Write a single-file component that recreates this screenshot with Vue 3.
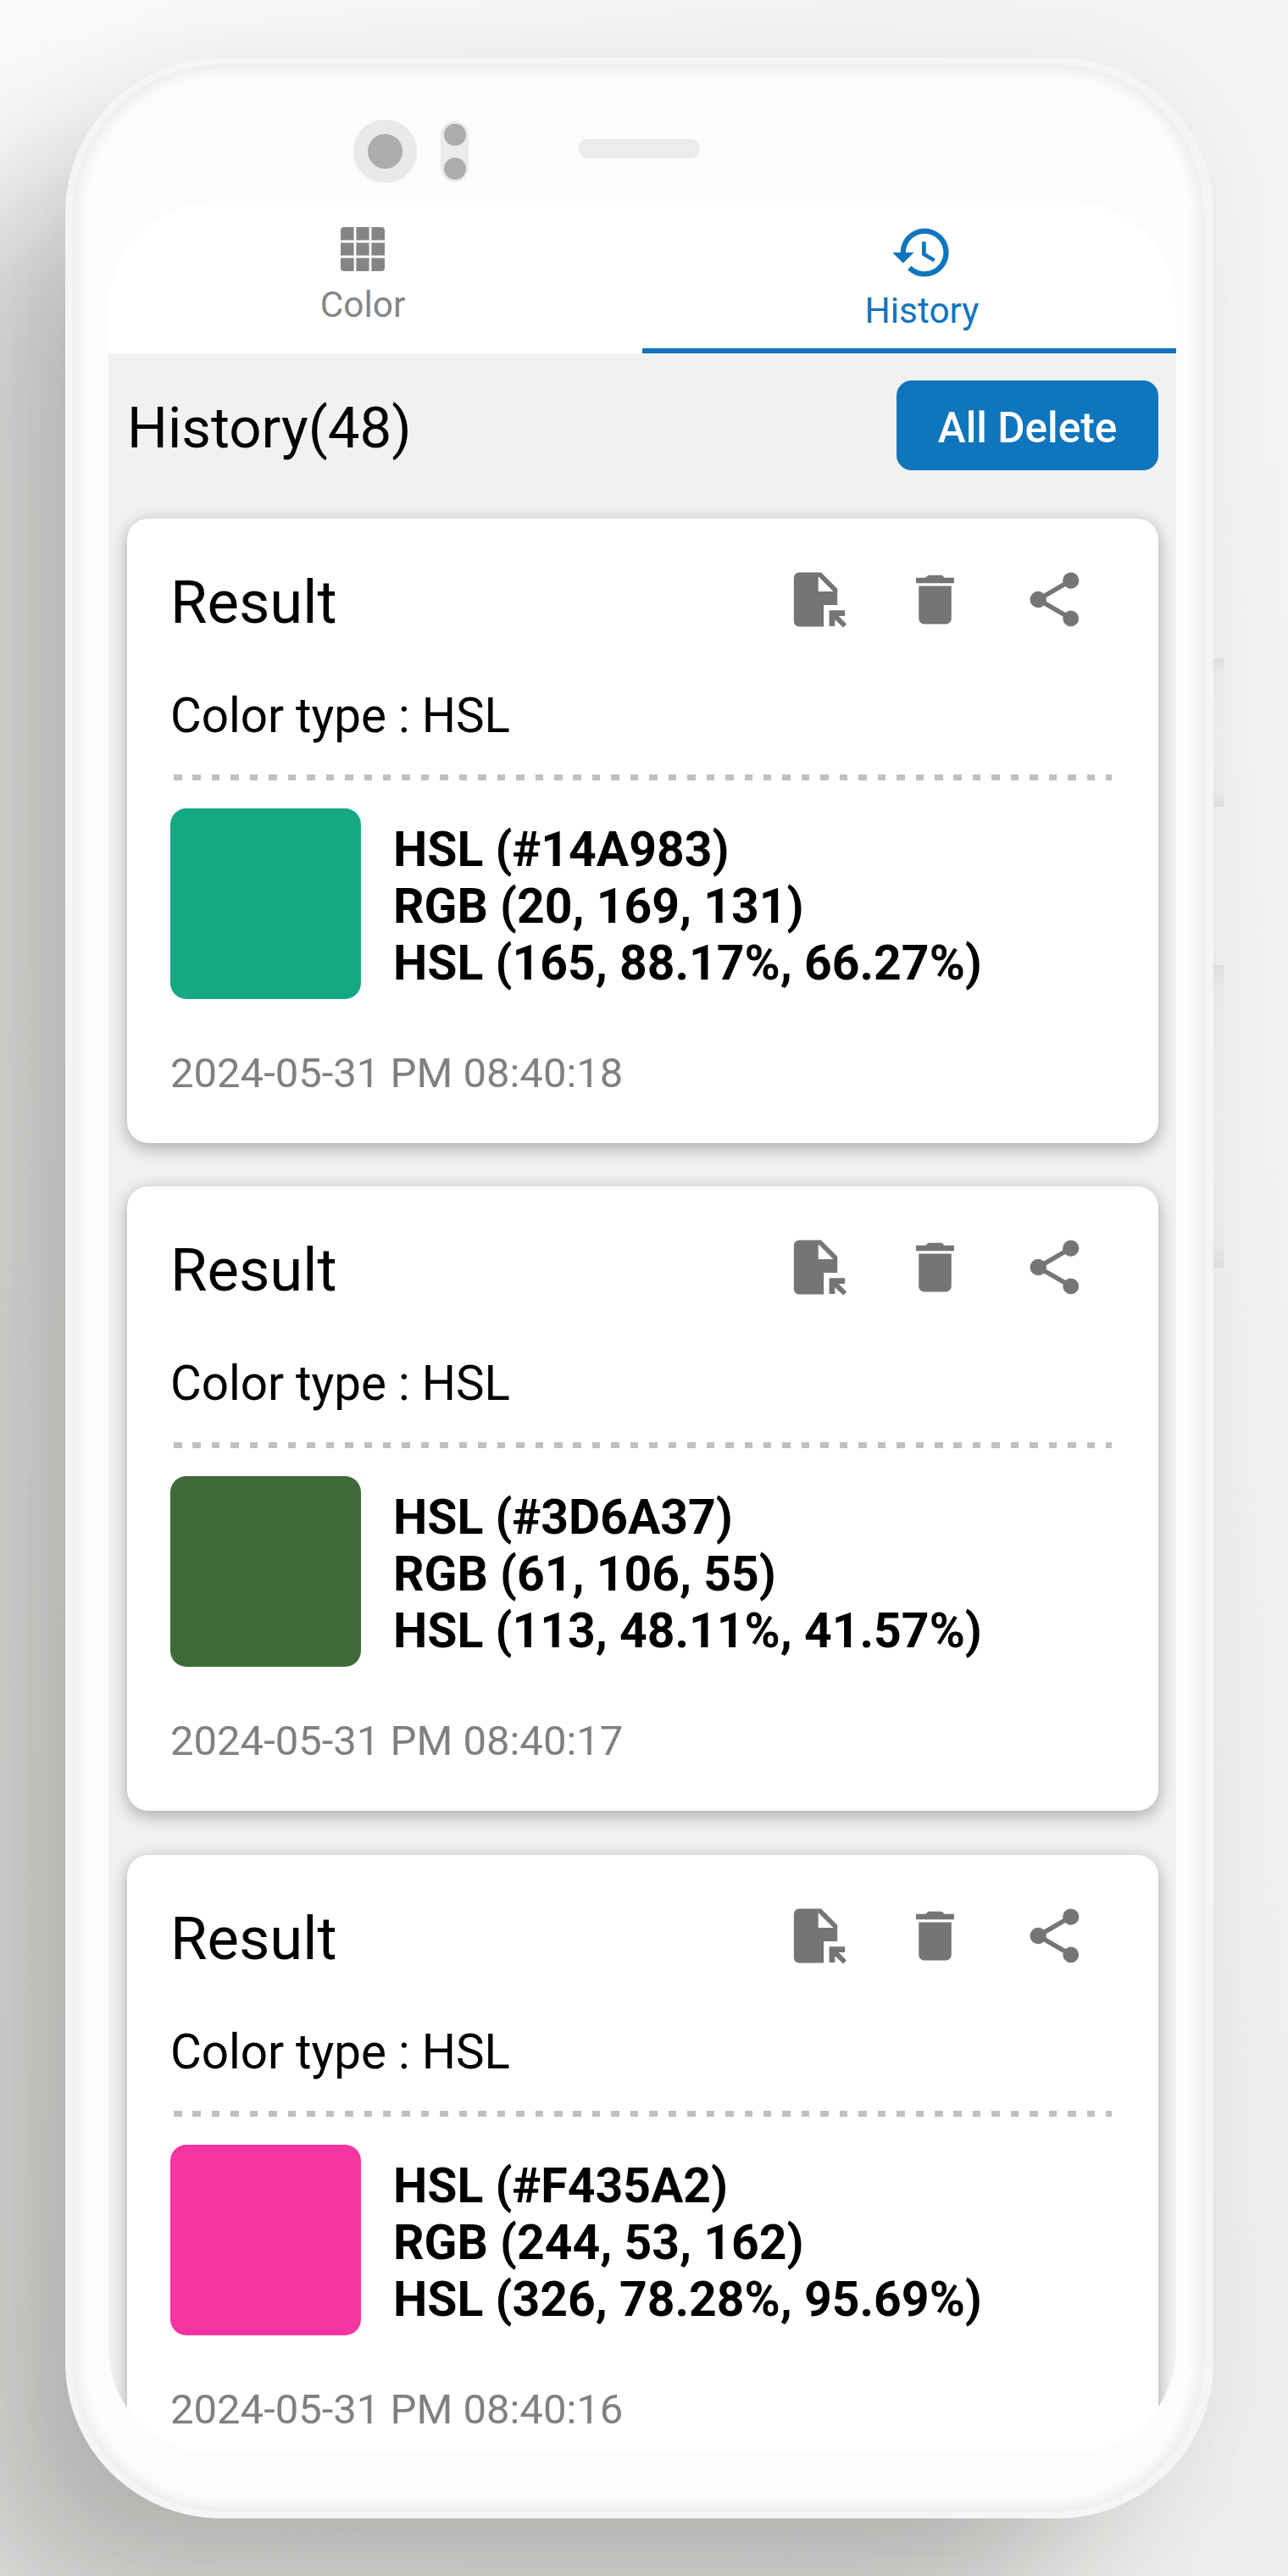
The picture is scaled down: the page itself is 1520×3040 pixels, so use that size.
<template>
  <div class="page">
    <div class="phone">
      <span class="side-key volume"></span>
      <span class="side-key power"></span>

      <div class="bezel">
        <div class="camera"></div>
        <div class="sensors">
          <i></i>
          <i></i>
        </div>
        <div class="speaker"></div>
      </div>

      <div class="screen">
        <nav class="tabs">
          <button class="tab tab-color">
            <svg class="grid-icon" viewBox="0 0 52 52">
              <path d="M4 0H15.6V15.6H0V4A4 4 0 0 1 4 0ZM18.4 0H33.6V15.6H18.4ZM36.4 0H48A4 4 0 0 1 52 4V15.6H36.4ZM0 18.4H15.6V33.6H0ZM18.4 18.4H33.6V33.6H18.4ZM36.4 18.4H52V33.6H36.4ZM0 36.4H15.6V52H4A4 4 0 0 1 0 48ZM18.4 36.4H33.6V52H18.4ZM36.4 36.4H52V48A4 4 0 0 1 48 52H36.4Z" />
            </svg>
            <span>Color</span>
          </button>
          <button class="tab tab-history active">
            <svg class="history-icon" viewBox="0 0 24 24">
              <path d="M13 3a9 9 0 0 0-9 9H1l3.89 3.89.07.14L9 12H6c0-3.87 3.13-7 7-7s7 3.13 7 7-3.13 7-7 7c-1.93 0-3.68-.79-4.94-2.06l-1.42 1.42A8.95 8.95 0 0 0 13 21a9 9 0 0 0 0-18zm-1 5v5l4.28 2.54.72-1.21-3.5-2.08V8H12z" />
            </svg>
            <span>History</span>
          </button>
        </nav>

        <header class="toolbar">
          <h1 class="title">History({{ total }})</h1>
          <button class="delete-all">All Delete</button>
        </header>

        <main class="list">
          <article v-for="item in items" :key="item.date" class="card">
            <div class="card-header">
              <h2 class="card-title">Result</h2>
              <div class="actions">
                <svg v-for="(path, name) in icons" :key="name" viewBox="0 0 24 24">
                  <path :d="path" />
                </svg>
              </div>
            </div>
            <p class="color-type">Color type : {{ item.type }}</p>
            <div class="divider"></div>
            <div class="result">
              <div class="swatch" :style="{ background: item.hex }"></div>
              <div class="values">
                <div>HSL ({{ item.hex }})</div>
                <div>RGB ({{ item.rgb }})</div>
                <div>HSL ({{ item.hsl }})</div>
              </div>
            </div>
            <p class="date">{{ item.date }}</p>
          </article>
        </main>
      </div>
    </div>
  </div>
</template>

<script setup>
const total = 48;

const items = [
  {
    type: 'HSL',
    hex: '#14A983',
    rgb: '20, 169, 131',
    hsl: '165, 88.17%, 66.27%',
    date: '2024-05-31 PM 08:40:18'
  },
  {
    type: 'HSL',
    hex: '#3D6A37',
    rgb: '61, 106, 55',
    hsl: '113, 48.11%, 41.57%',
    date: '2024-05-31 PM 08:40:17'
  },
  {
    type: 'HSL',
    hex: '#F435A2',
    rgb: '244, 53, 162',
    hsl: '326, 78.28%, 95.69%',
    date: '2024-05-31 PM 08:40:16'
  }
];

const icons = {
  open: 'M6 2H14L20 8V14H15V22H6A2 2 0 0 1 4 20V4A2 2 0 0 1 6 2ZM13 3.5V9H18.5ZM17 16H22.8V18.1H20.5L23.4 21L22.2 22.3L19.1 19.4V21.8H17Z',
  remove: 'M6 19c0 1.1.9 2 2 2h8c1.1 0 2-.9 2-2V7H6v12zM19 4h-3.5l-1-1h-5l-1 1H5v2h14V4z',
  share: 'M18 16.08c-.76 0-1.44.3-1.96.77L8.91 12.7c.05-.23.09-.46.09-.7s-.04-.47-.09-.7l7.05-4.11c.54.5 1.25.81 2.04.81a3 3 0 1 0-3-3c0 .24.04.47.09.7L8.04 9.81A3 3 0 1 0 6 15c.79 0 1.5-.31 2.04-.81l7.12 4.15c-.05.21-.08.43-.08.66a2.92 2.92 0 1 0 2.92-2.92z'
};
</script>

<style>
body {
  margin: 0;
  overflow: hidden;
}
</style>

<style scoped>
.page {
  width: 1520px;
  height: 3040px;
  box-sizing: border-box;
  padding: 68px 0 0 77px;
  overflow: hidden;
  background: linear-gradient(160deg, #fafafa 0%, #f4f4f3 10%, #f4f4f2 30%, #ededeb 100%);
  font-family: Roboto, 'Liberation Sans', sans-serif;
  color: #000;
}

.phone {
  position: relative;
  width: 1355px;
  height: 2904px;
  box-sizing: border-box;
  border: 8px solid #f5f5f5;
  border-right-width: 11px;
  border-radius: 184px;
  background: #fcfcfc;
  box-shadow:
    inset 0 0 24px rgba(0, 0, 0, 0.11),
    0 0 120px rgba(0, 0, 0, 0.05),
    -150px 142px 190px -20px rgba(20, 20, 16, 0.25);
}

.side-key {
  position: absolute;
  left: 100%;
  margin-left: 11px;
  width: 12px;
  background: linear-gradient(#dedede, #e9e9e9 9%, #ececec 50%, #e9e9e9 91%, #dcdcdc);
}

.volume {
  top: 701px;
  height: 175px;
}

.power {
  top: 1063px;
  height: 357px;
}

.bezel {
  display: flex;
  align-items: center;
  height: 161px;
  box-sizing: border-box;
  padding: 43px 0 0 332px;
}

.camera {
  width: 75px;
  height: 75px;
  box-sizing: border-box;
  border: 17px solid #e9e9e9;
  border-radius: 50%;
  background: #adadad;
}

.sensors {
  display: flex;
  flex-direction: column;
  align-items: center;
  justify-content: space-between;
  width: 33px;
  height: 72px;
  box-sizing: border-box;
  margin: 2px 130px 0 28px;
  padding: 3px 0;
  border-radius: 17px;
  background: #ebebeb;
}

.sensors i {
  width: 26px;
  height: 26px;
  border-radius: 50%;
  background: #adadad;
}

.speaker {
  width: 143px;
  height: 23px;
  margin-bottom: 5px;
  border-radius: 12px;
  background: #ececec;
}

.screen {
  width: 1260px;
  height: 2659px;
  margin-left: 43px;
  border-radius: 125px;
  overflow: hidden;
  background: #f1f1f1;
}

.tabs {
  display: flex;
  height: 179.5px;
  background: #fff;
}

.tab {
  flex: 1;
  display: flex;
  flex-direction: column;
  align-items: center;
  box-sizing: border-box;
  border: none;
  background: none;
  font: 400 42.4px/50px Roboto, sans-serif;
  color: #858585;
}

.tab svg {
  fill: currentColor;
}

.tab-color {
  gap: 15px;
  padding: 31px 30px 0 0;
}

.tab-history {
  gap: 6px;
  padding: 23px 0 0 30px;
}

.tab.active {
  color: #0f75bd;
  border-bottom: 6px solid #0f75bd;
}

.grid-icon {
  width: 52px;
  height: 52px;
}

.history-icon {
  width: 76px;
  height: 76px;
}

.toolbar {
  display: flex;
  justify-content: space-between;
  height: 195.5px;
  box-sizing: border-box;
  padding: 32px 21px 0 22px;
}

.title {
  margin: 0;
  font-size: 67.2px;
  font-weight: 400;
  line-height: 112px;
}

.delete-all {
  width: 309px;
  height: 106px;
  padding: 0;
  border: none;
  border-radius: 18px;
  background: #0f75bd;
  color: #fff;
  font: 500 49.5px/112px Roboto, sans-serif;
}

.list {
  display: flex;
  flex-direction: column;
  gap: 51.8px;
  padding: 0 21px 0 22px;
}

.card {
  height: 736.5px;
  flex-shrink: 0;
  box-sizing: border-box;
  padding: 57px 55px 0 51px;
  border-radius: 25px;
  background: #fff;
  box-shadow:
    0 8px 20px rgba(0, 0, 0, 0.2),
    0 1px 18px rgba(0, 0, 0, 0.12);
}

.card-header {
  display: flex;
  justify-content: space-between;
  align-items: flex-start;
}

.card-title {
  margin: 0;
  font-size: 70.6px;
  font-weight: 400;
  line-height: 85px;
}

.actions {
  display: flex;
  gap: 64px;
  margin-right: 29px;
}

.actions svg {
  width: 77px;
  height: 77px;
  fill: #757575;
  fill-rule: evenodd;
}

.color-type {
  margin: 58px 0 35px;
  font-size: 56.5px;
  line-height: 67px;
}

.divider {
  height: 7px;
  margin-left: 4px;
  background: repeating-linear-gradient(90deg, #c0c0c0 0 9.5px, transparent 9.5px 22.45px);
}

.result {
  display: flex;
  gap: 38px;
  margin-top: 33px;
}

.swatch {
  width: 225px;
  height: 225px;
  border-radius: 19px;
}

.values {
  padding-top: 15px;
  font-size: 57.1px;
  font-weight: 700;
  line-height: 67px;
  white-space: nowrap;
}

.date {
  margin: 58px 0 0;
  font-size: 49px;
  line-height: 60px;
  color: #808080;
}
</style>
